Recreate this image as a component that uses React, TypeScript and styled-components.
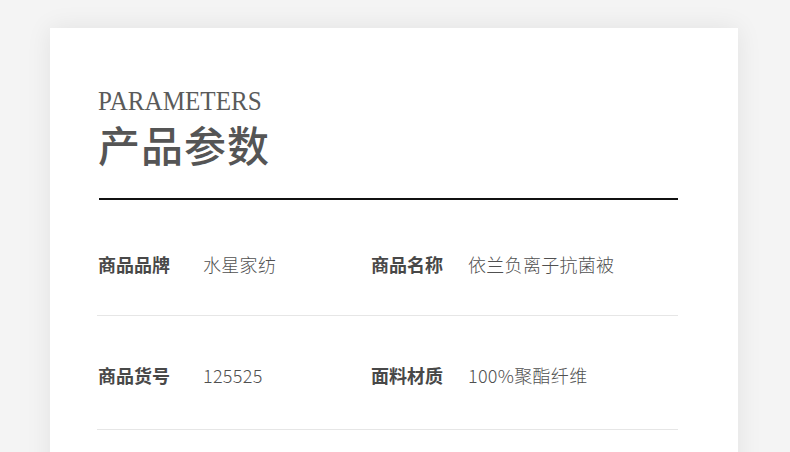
import React from "react";
import styled, { createGlobalStyle } from "styled-components";

const GlobalStyle = createGlobalStyle`
  html, body {
    margin: 0;
    padding: 0;
    background: #f4f4f4;
  }
  body {
    width: 790px;
    height: 452px;
    overflow: hidden;
    font-family: "Noto Sans CJK SC", "Noto Sans", sans-serif;
  }
`;

const Page = styled.div`
  width: 790px;
  height: 452px;
  background: #f4f4f4;
  padding: 28px 0 0 50px;
  box-sizing: border-box;
  overflow: hidden;
`;

const Card = styled.div`
  width: 688px;
  height: 500px;
  background: #ffffff;
  box-shadow: 0 0 24px rgba(0, 0, 0, 0.08);
  padding: 60px 60px 0 48px;
  box-sizing: border-box;
`;

const EnTitle = styled.div`
  font-family: "Liberation Serif", "DejaVu Serif", serif;
  font-size: 27px;
  line-height: 26px;
  color: #5a5a5a;
  letter-spacing: 0px;
  transform: scaleX(0.93);
  transform-origin: left center;
`;

const CnTitle = styled.div`
  margin-top: 8px;
  font-family: "Noto Sans CJK SC", sans-serif;
  font-size: 42px;
  line-height: 44px;
  font-weight: 500;
  color: #555555;
  letter-spacing: 1px;
`;

const Rule = styled.div`
  margin-top: 32px;
  margin-left: 1px;
  height: 2px;
  background: #111111;
`;

const Row = styled.div<{ $pt: number; $pb: number }>`
  display: grid;
  grid-template-columns: 106px 167px 98px 1fr;
  align-items: center;
  padding: ${(p) => p.$pt}px 0 ${(p) => p.$pb}px;
  border-bottom: 1px solid #e6e6e6;
  margin-left: -1px;
`;

const Label = styled.div`
  font-family: "Noto Sans CJK SC", sans-serif;
  font-size: 18px;
  line-height: 24px;
  font-weight: 700;
  color: #484848;
  padding-left: 1px;
`;

const Value = styled.div`
  font-family: "Noto Sans CJK SC", sans-serif;
  font-size: 18px;
  line-height: 24px;
  font-weight: 300;
  color: #505050;
  letter-spacing: 0.3px;
`;

const rows = [
  { pt: 52, pb: 39, items: [["商品品牌", "水星家纺"], ["商品名称", "依兰负离子抗菌被"]] },
  { pt: 47, pb: 42, items: [["商品货号", "125525"], ["面料材质", "100%聚酯纤维"]] },
];

export default function App() {
  return (
    <>
      <GlobalStyle />
      <Page>
        <Card>
          <EnTitle>PARAMETERS</EnTitle>
          <CnTitle>产品参数</CnTitle>
          <Rule />
          {rows.map((r, i) => (
            <Row key={i} $pt={r.pt} $pb={r.pb}>
              {r.items.map(([l, v]) => (
                <React.Fragment key={l}>
                  <Label>{l}</Label>
                  <Value>{v}</Value>
                </React.Fragment>
              ))}
            </Row>
          ))}
        </Card>
      </Page>
    </>
  );
}
